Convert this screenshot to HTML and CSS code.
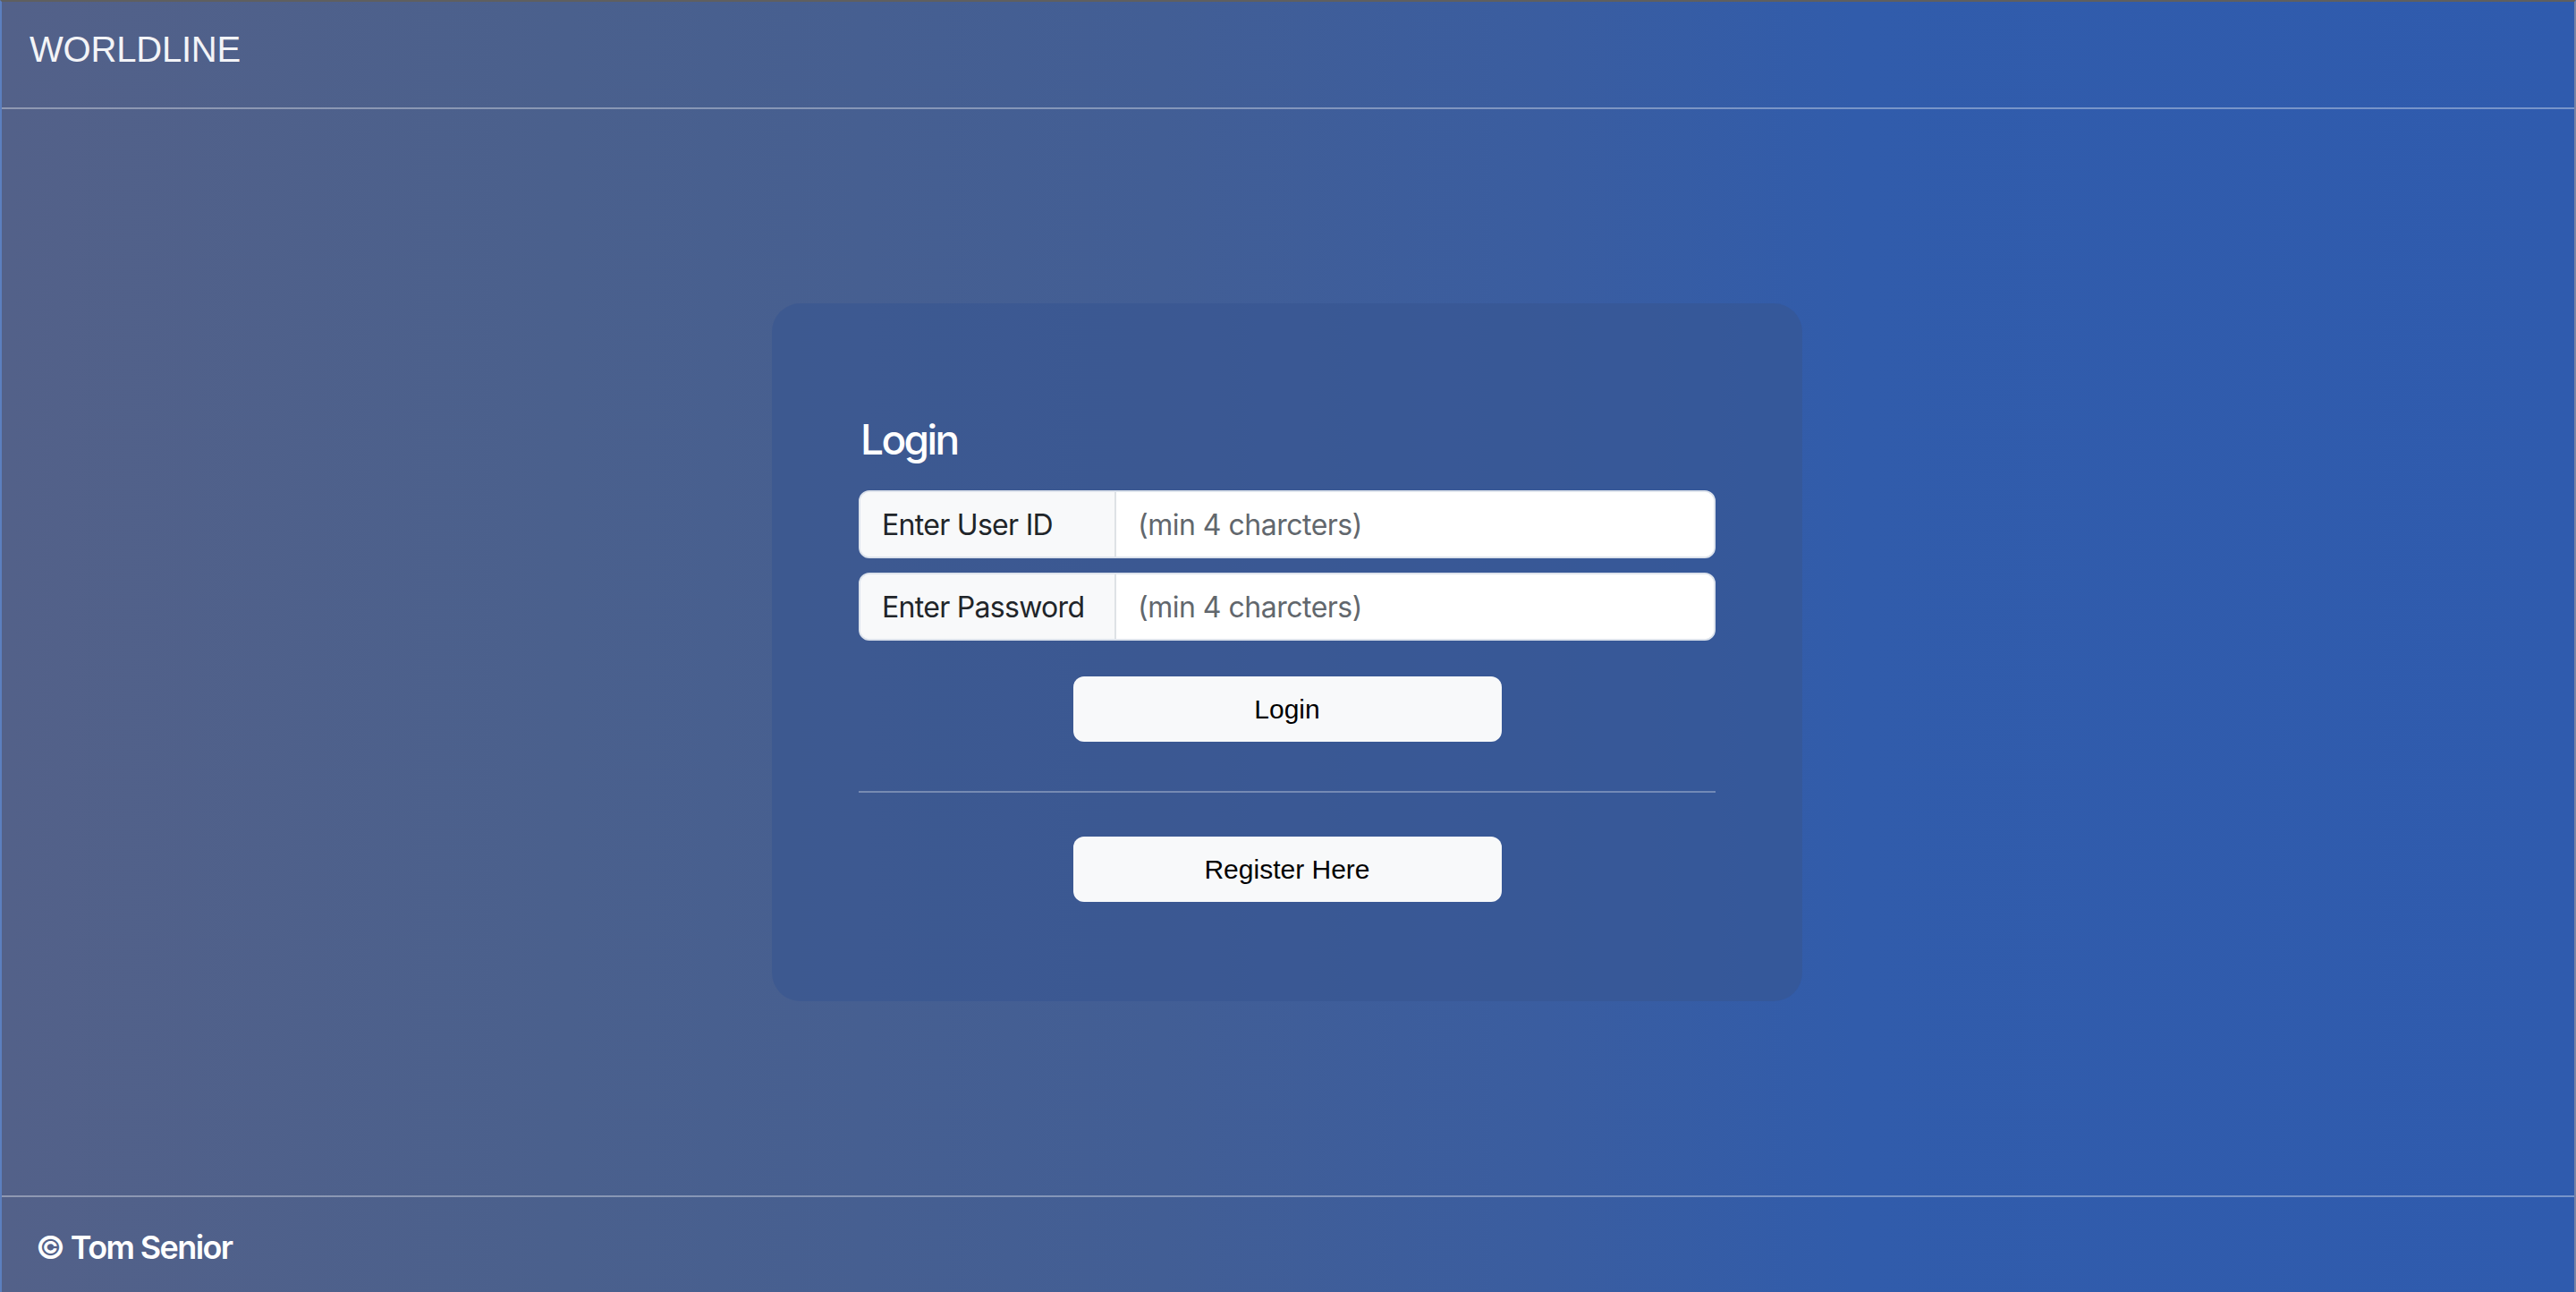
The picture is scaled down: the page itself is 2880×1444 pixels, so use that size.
FILE: index.html
```html
<!DOCTYPE html>
<html lang="en">
<head>
<meta charset="utf-8">
<title>Worldline Login</title>
<link rel="stylesheet" href="styles.css">
</head>
<body>
  <div class="app">
    <header class="topbar">
      <span class="brand">WORLDLINE</span>
    </header>
    <main class="main">
      <section class="card">
        <h3 class="card-title">Login</h3>
        <div class="input-group">
          <span class="addon">Enter User ID</span>
          <input class="field" type="text" placeholder="(min 4 charcters)">
        </div>
        <div class="input-group">
          <span class="addon">Enter Password</span>
          <input class="field" type="password" placeholder="(min 4 charcters)">
        </div>
        <div class="btn-row btn-row-login">
          <button class="btn" type="button">Login</button>
        </div>
        <hr class="divider">
        <div class="btn-row">
          <button class="btn" type="button">Register Here</button>
        </div>
      </section>
    </main>
    <footer class="footer">
      <span class="copy">© Tom Senior</span>
    </footer>
  </div>
</body>
</html>
```

FILE: styles.css
```css
* { box-sizing: border-box; }

html, body {
  margin: 0;
  padding: 0;
  height: 1444px;
}

body {
  background: #2f5bae;
}

.app {
  height: 1444px;
  display: flex;
  flex-direction: column;
  border-top: 2px solid #5f5f5f;
  border-left: 2px solid rgba(255, 255, 255, 0.22);
  border-right: 2px solid rgba(255, 255, 255, 0.22);
  background: linear-gradient(to right, #536189 0%, #4a608d 22%, #425e95 45%, #3a5da0 60%, #315cab 72%, #2f5bae 100%);
  color: #fff;
}

.topbar {
  height: 120px;
  flex: 0 0 auto;
  padding: 30px 0 0 31px;
  border-bottom: 2px solid rgba(255, 255, 255, 0.35);
}

.brand {
  font-family: "Liberation Sans", Arial, sans-serif;
  font-size: 40px;
  line-height: 46px;
  color: #f3f4f7;
  letter-spacing: -0.2px;
}

.main {
  flex: 1 1 auto;
  display: flex;
  align-items: center;
  justify-content: center;
}

.card {
  width: 1152px;
  height: 780px;
  margin-left: -2px;
  padding: 123px 97px 0 97px;
  border-radius: 32px;
  background: rgba(55, 85, 145, 0.6);
  display: flex;
  flex-direction: column;
}

.card-title {
  margin: 0 0 28px 2px;
  font-family: "Inter", "Noto Sans", sans-serif;
  font-weight: 500;
  font-size: 46px;
  line-height: 58px;
  letter-spacing: -2.6px;
  color: #fff;
}

.input-group {
  display: flex;
  height: 76px;
  margin-bottom: 16px;
  border-radius: 12px;
  overflow: hidden;
  border: 2px solid #dde3ec;
  background: #fff;
}

.addon {
  flex: 0 0 286px;
  display: flex;
  align-items: center;
  padding: 0 24px;
  background: #f8f9fa;
  border-right: 2px solid #dee2e6;
  font-family: "Inter", "Noto Sans", sans-serif;
  font-size: 32px;
  letter-spacing: -0.7px;
  color: #212529;
}

.field {
  flex: 1 1 auto;
  min-width: 0;
  border: 0;
  outline: none;
  padding: 0 24px;
  background: #fff;
  font-family: "Inter", "Noto Sans", sans-serif;
  font-size: 32px;
  letter-spacing: -0.5px;
  color: #212529;
}

.field::placeholder {
  color: #62676d;
  opacity: 1;
}

.btn-row {
  display: flex;
  justify-content: center;
}

.btn-row-login {
  margin-top: 24px;
}

.btn {
  width: 479px;
  height: 73px;
  border: 0;
  border-radius: 12px;
  background: #f8f9fa;
  color: #000;
  font-family: "Liberation Sans", Arial, sans-serif;
  font-size: 30px;
  padding: 0;
}

.divider {
  margin: 55px 0 49px 0;
  border: 0;
  border-top: 2px solid rgba(255, 255, 255, 0.3);
  height: 0;
}

.footer {
  height: 108px;
  flex: 0 0 auto;
  padding: 34px 0 0 38px;
  border-top: 2px solid rgba(255, 255, 255, 0.35);
}

.copy {
  font-family: "Inter", "Noto Sans", sans-serif;
  font-weight: 600;
  font-size: 36px;
  line-height: 44px;
  letter-spacing: -1.6px;
  color: #fff;
}
```
